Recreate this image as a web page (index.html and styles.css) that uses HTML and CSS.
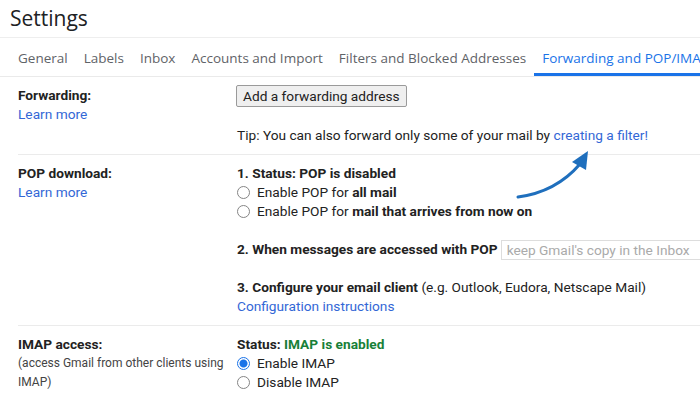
FILE: index.html
```html
<!DOCTYPE html>
<html lang="en">
<head>
    <meta charset="UTF-8">
    <title>Settings</title>
    <link rel="stylesheet" href="styles.css">
</head>
<body>

<div class="page">
    <div class="title">Settings</div>

    <div class="tabs">
        <span class="tab">General</span>
        <span class="tab">Labels</span>
        <span class="tab">Inbox</span>
        <span class="tab">Accounts and Import</span>
        <span class="tab">Filters and Blocked Addresses</span>
        <span class="tab active">Forwarding and POP/IMAP</span>
    </div>

    <div class="row">
        <div class="label">
            <b>Forwarding:</b>
            <a class="link">Learn more</a>
        </div>
        <div class="value">
            <button class="btn">Add a forwarding address</button>
            <p class="tip">Tip: You can also forward only some of your mail by <a class="link">creating a filter!</a></p>
        </div>
    </div>

    <div class="row">
        <div class="label">
            <b>POP download:</b>
            <a class="link">Learn more</a>
        </div>
        <div class="value">
            <b>1. Status: POP is disabled</b>
            <div class="opt"><span class="radio"></span>Enable POP for <b>all mail</b></div>
            <div class="opt"><span class="radio"></span>Enable POP for <b>mail that arrives from now on</b></div>
            <div class="step pick"><b>2. When messages are accessed with POP</b><span class="select">keep Gmail's copy in the Inbox</span></div>
            <div class="step"><b>3. Configure your email client</b> (e.g. Outlook, Eudora, Netscape Mail)</div>
            <a class="link">Configuration instructions</a>
        </div>
    </div>

    <div class="row">
        <div class="label">
            <b>IMAP access:</b>
            <span class="note">(access Gmail from other clients using IMAP)</span>
            <a class="link more">Learn more</a>
        </div>
        <div class="value">
            <b>Status: <span class="ok">IMAP is enabled</span></b>
            <div class="opt"><span class="radio checked"></span>Enable IMAP</div>
            <div class="opt"><span class="radio"></span>Disable IMAP</div>
        </div>
    </div>

    <!-- annotation arrow pointing at the filter link -->
    <svg class="arrow" width="90" height="60" viewBox="0 0 90 60">
        <path d="M8 52 Q46 47 70 19" fill="none" stroke="#1f6fbd" stroke-width="3" stroke-linecap="round"/>
        <polygon points="78,6 62,17 76,25" fill="#1f6fbd"/>
    </svg>
</div>

</body>
</html>
```

FILE: styles.css
```css
body {
    margin: 0;
    font-family: Roboto, "Liberation Sans", Arial, sans-serif;
    font-size: 13.7px;
    line-height: 19px;
    color: #222;
    background: #fff;
    overflow: hidden;
}

.page {
    position: relative;
    width: 700px;
    height: 400px;
    overflow: hidden;
}

.title {
    height: 37px;
    line-height: 36px;
    padding-left: 10px;
    font-family: "Open Sans", Roboto, sans-serif;
    font-size: 21px;
    color: #202124;
    border-bottom: 1px solid #eeeeee;
}

.tabs {
    display: flex;
    height: 38px;
    padding-left: 10px;
    border-bottom: 1px solid #eaeaea;
    white-space: nowrap;
}

.tab {
    padding: 0 8px;
    line-height: 40px;
    font-family: "Open Sans", Roboto, sans-serif;
    font-size: 13.5px;
    color: #5f6368;
}

.tab.active {
    color: #1a73e8;
    box-shadow: inset 0 -3px 0 #1a73e8;
}

.row {
    display: grid;
    grid-template-columns: 219px 1fr;
    margin-left: 18px;
    padding: 9px 0;
    border-bottom: 1px solid #ebebeb;
}

.label,
.value {
    display: flex;
    flex-direction: column;
    align-items: flex-start;
    white-space: nowrap;
}

.label {
    padding-right: 12px;
}

b {
    font-weight: 700;
}

.link {
    color: #3367d6;
    text-decoration: none;
}

.note {
    font-size: 12px;
    color: #444;
    white-space: normal;
}

.more {
    margin-top: 6px;
}

.btn {
    height: 22px;
    margin: -1px 0 0 -1px;
    padding: 0 6px;
    font-family: Roboto, sans-serif;
    font-size: 13.7px;
    color: #222;
    background: #efefef;
    border: 1px solid #9a9a9a;
    border-radius: 2px;
}

.tip {
    margin: 19px 0 0;
}

.radio {
    display: inline-block;
    width: 11px;
    height: 11px;
    margin-right: 7px;
    vertical-align: -2px;
    border: 1px solid #858585;
    border-radius: 50%;
    box-sizing: content-box;
}

.radio.checked {
    border-color: #1a73e8;
    background: radial-gradient(circle, #1a73e8 0 3.5px, #fff 4.5px);
}

.step {
    margin-top: 19px;
}

.pick {
    display: flex;
    align-items: center;
    height: 19px;
}

.select {
    width: 230px;
    height: 18px;
    line-height: 18px;
    margin-left: 3px;
    padding-left: 5px;
    border: 1px solid #dddddd;
    color: #aaaaaa;
    font-weight: 400;
}

.ok {
    color: #188038;
}

.arrow {
    position: absolute;
    left: 510px;
    top: 145px;
}
```
